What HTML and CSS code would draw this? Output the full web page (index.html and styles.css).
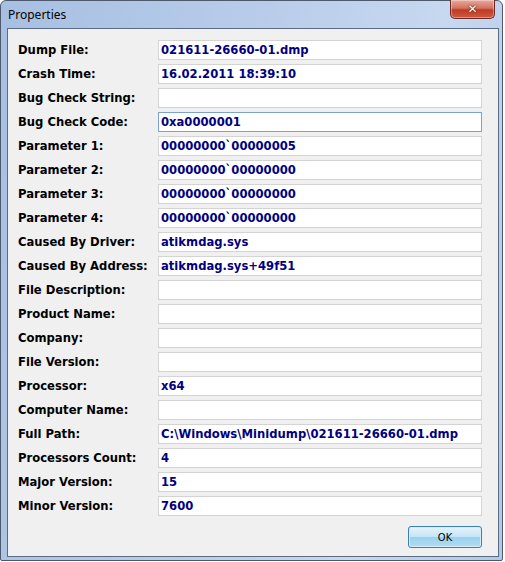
FILE: index.html
```html
<!DOCTYPE html>
<html lang="en">
<head>
    <meta charset="UTF-8">
    <title>Properties</title>
    <link rel="stylesheet" href="styles.css">
</head>
<body>
    <div class="window">
        <div class="titlebar">
            <span class="title">Properties</span>
            <button class="close-btn" title="Close">&#x2715;</button>
        </div>

        <div class="client">
            <div class="props">
                <label>Dump File:</label>
                <div class="field">021611-26660-01.dmp</div>

                <label>Crash Time:</label>
                <div class="field">16.02.2011 18:39:10</div>

                <label>Bug Check String:</label>
                <div class="field"></div>

                <label>Bug Check Code:</label>
                <div class="field focused">0xa0000001</div>

                <label>Parameter 1:</label>
                <div class="field">00000000`00000005</div>

                <label>Parameter 2:</label>
                <div class="field">00000000`00000000</div>

                <label>Parameter 3:</label>
                <div class="field">00000000`00000000</div>

                <label>Parameter 4:</label>
                <div class="field">00000000`00000000</div>

                <label>Caused By Driver:</label>
                <div class="field">atikmdag.sys</div>

                <label>Caused By Address:</label>
                <div class="field">atikmdag.sys+49f51</div>

                <label>File Description:</label>
                <div class="field"></div>

                <label>Product Name:</label>
                <div class="field"></div>

                <label>Company:</label>
                <div class="field"></div>

                <label>File Version:</label>
                <div class="field"></div>

                <label>Processor:</label>
                <div class="field">x64</div>

                <label>Computer Name:</label>
                <div class="field"></div>

                <label>Full Path:</label>
                <div class="field">C:\Windows\Minidump\021611-26660-01.dmp</div>

                <label>Processors Count:</label>
                <div class="field">4</div>

                <label>Major Version:</label>
                <div class="field">15</div>

                <label>Minor Version:</label>
                <div class="field">7600</div>
            </div>

            <div class="buttons">
                <button class="ok-btn">OK</button>
            </div>
        </div>
    </div>
</body>
</html>
```

FILE: styles.css
```css
/* Page: just the dialog on white */
body {
    margin: 0;
    background-color: #ffffff;
    font-family: "DejaVu Sans", Verdana, sans-serif;
}

/* Outer window frame (Win7 basic look) */
.window {
    width: 501px;
    height: 559px;
    border: 1px solid #4d5a6e;
    border-radius: 6px 6px 2px 2px;
    background: linear-gradient(100deg, #a7bfe2 0%, #b9cdea 45%, #c7d8f0 75%, #b3c8e8 100%);
    display: flex;
    flex-direction: column;
}

/* Title bar */
.titlebar {
    height: 27px;
    display: flex;
    justify-content: space-between;
    align-items: flex-start;
}

.title {
    font-family: "Noto Sans", "Open Sans", sans-serif;
    font-size: 12px;
    color: #000000;
    padding: 5px 0 0 7px;
}

.close-btn {
    width: 45px;
    height: 19px;
    margin-right: 7px;
    margin-top: -1px;
    border: 1px solid #6b2a24;
    border-top: none;
    border-radius: 0 0 5px 5px;
    background: linear-gradient(#e8a99e 0%, #d4735f 45%, #bf3b25 55%, #cc5a40 100%);
    color: #ffffff;
    font-family: "DejaVu Sans", sans-serif;
    font-size: 12px;
    font-weight: bold;
    line-height: 17px;
    padding: 0;
    text-shadow: 0 0 2px #4a1a14, 0 0 1px #4a1a14;
    box-shadow: inset 0 0 0 1px rgba(255, 255, 255, 0.35);
}

/* Client area */
.client {
    flex: 1;
    margin: 0 3px 3px 6px;
    border: 1px solid #5b6b82;
    background-color: #f0f0f0;
}

/* Label / value rows */
.props {
    display: grid;
    grid-template-columns: 140px 1fr;
    row-gap: 4px;
    padding: 11px 16px 0 10px;
}

label {
    font-size: 11.6px;
    font-weight: bold;
    color: #000000;
    line-height: 20px;
}

.field {
    height: 18px;
    border: 1px solid #d4d4d4;
    background-color: #ffffff;
    color: #000080;
    font-size: 11.6px;
    font-weight: bold;
    line-height: 18px;
    padding-left: 2px;
    white-space: nowrap;
    overflow: hidden;
}

.field.focused {
    border-color: #7da2ce;
}

/* OK button */
.buttons {
    display: flex;
    justify-content: flex-end;
    padding: 10px 16px 0 0;
}

.ok-btn {
    width: 74px;
    height: 22px;
    border: 1px solid #3c7fb1;
    border-radius: 3px;
    background: linear-gradient(#e5f4fc 0%, #c4e5f6 50%, #98d1ef 51%, #b1dcf1 100%);
    font-family: "DejaVu Sans Condensed", "DejaVu Sans", sans-serif;
    font-size: 11px;
    color: #000000;
    padding: 0;
    box-shadow: inset 0 0 0 1px #d6eefa;
}
```
